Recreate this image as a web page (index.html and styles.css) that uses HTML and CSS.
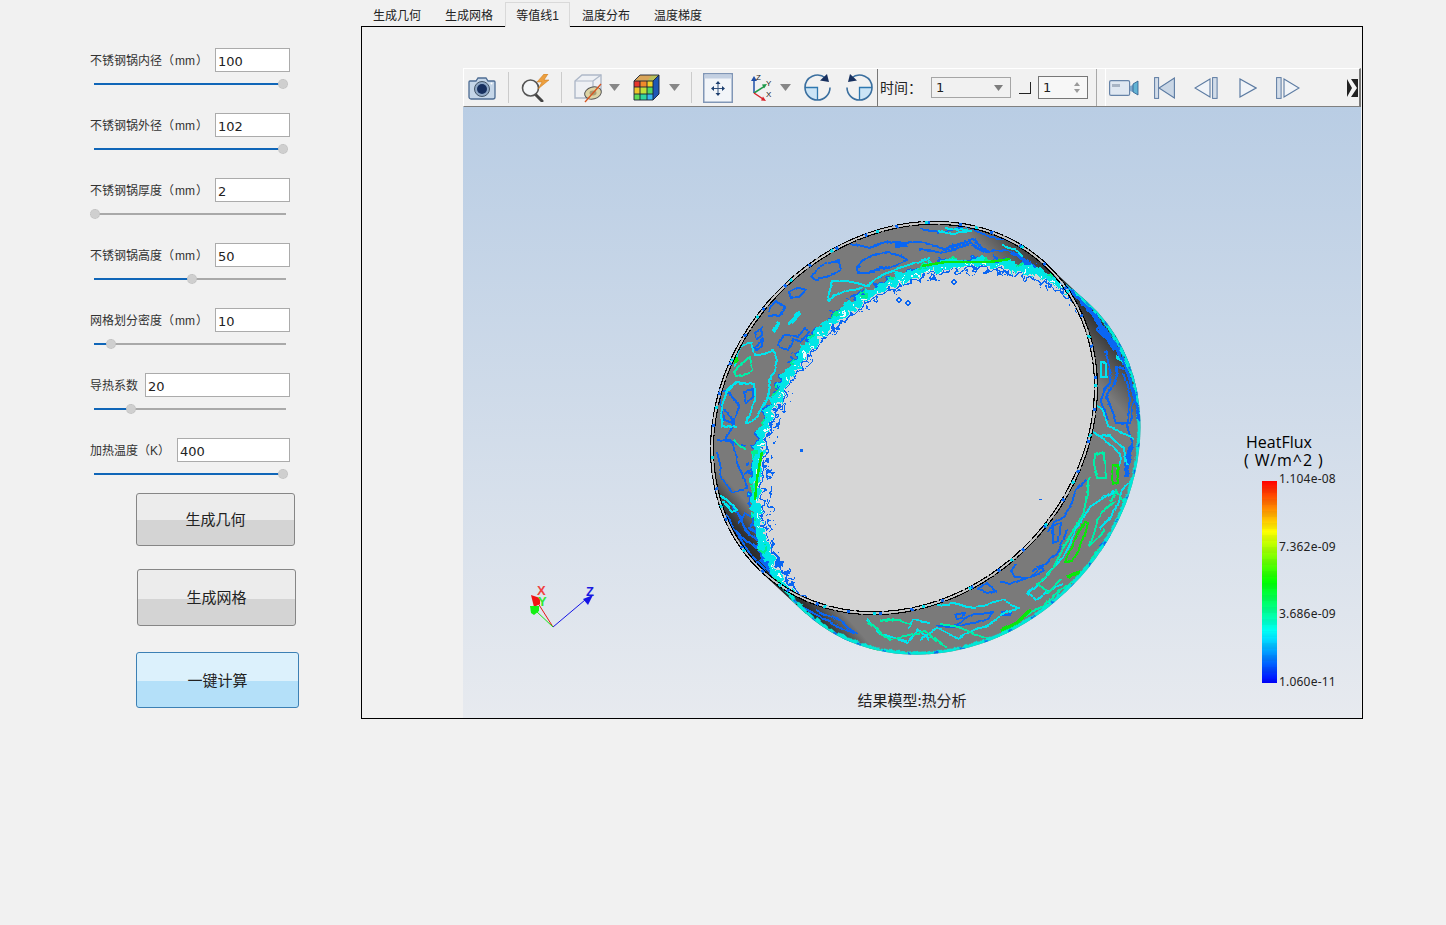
FILE: index.html
```html
<!DOCTYPE html>
<html lang="zh">
<head>
<meta charset="utf-8">
<title>热分析</title>
<link rel="stylesheet" href="styles.css">
</head>
<body>
<div class="app">
  <aside class="side">
    <div class="fields">
      <div class="field"><div class="row"><label>不锈钢锅内径（<span class="u">mm</span>）</label><input class="in" value="100"></div><div class="track"><div class="fill" style="width:189px"><i class="knob"></i></div></div></div>
      <div class="field"><div class="row"><label>不锈钢锅外径（<span class="u">mm</span>）</label><input class="in" value="102"></div><div class="track"><div class="fill" style="width:189px"><i class="knob"></i></div></div></div>
      <div class="field"><div class="row"><label>不锈钢锅厚度（<span class="u">mm</span>）</label><input class="in" value="2"></div><div class="track"><div class="fill" style="width:1px"><i class="knob"></i></div></div></div>
      <div class="field"><div class="row"><label>不锈钢锅高度（<span class="u">mm</span>）</label><input class="in" value="50"></div><div class="track"><div class="fill" style="width:98px"><i class="knob"></i></div></div></div>
      <div class="field"><div class="row"><label>网格划分密度（<span class="u">mm</span>）</label><input class="in" value="10"></div><div class="track"><div class="fill" style="width:17px"><i class="knob"></i></div></div></div>
      <div class="field"><div class="row"><label>导热系数</label><input class="in in-l" value="20"></div><div class="track"><div class="fill" style="width:37px"><i class="knob"></i></div></div></div>
      <div class="field"><div class="row"><label>加热温度（K）</label><input class="in in-m" value="400"></div><div class="track"><div class="fill" style="width:189px"><i class="knob"></i></div></div></div>
    </div>
    <button class="btn btn-geo">生成几何</button>
    <button class="btn btn-mesh">生成网格</button>
    <button class="btn btn-run">一键计算</button>
  </aside>

  <main class="main">
    <nav class="tabs">
      <span class="tab">生成几何</span>
      <span class="tab">生成网格</span>
      <span class="tab active">等值线1</span>
      <span class="tab">温度分布</span>
      <span class="tab">温度梯度</span>
    </nav>
    <section class="pane">
      <div class="toolbar">
        <svg class="m4" width="28" height="24" viewBox="0 0 28 24"><path d="M2 5h6l2-3h8l2 3h6a1 1 0 0 1 1 1v15a2 2 0 0 1-2 2H3a2 2 0 0 1-2-2V6a1 1 0 0 1 1-1z" fill="#c5d6e8" stroke="#4d6c93" stroke-width="1.3"/><circle cx="14" cy="13" r="7.5" fill="#8fa8c6" stroke="#456"/><circle cx="14" cy="13" r="5" fill="#17305f"/><circle cx="23.5" cy="7.5" r="1" fill="#fff"/></svg>
        <span class="sep m12"></span>
        <svg class="m12" width="29" height="28" viewBox="0 0 29 28"><path d="M14 20l7 7" stroke="#444" stroke-width="3" stroke-linecap="round"/><circle cx="9.500" cy="14" r="8" fill="#f4f6f8" stroke="#555" stroke-width="1.600"/><path d="M23 0l-7 8h5l-4 7 11-9h-5l4-6z" fill="#ec9f3e" stroke="#c9761a" stroke-width=".5"/></svg>
        <span class="sep m11"></span>
        <svg class="m12" width="30" height="30" viewBox="0 0 30 30"><path d="M1 8l7-6h19v16l-8 7H1z" fill="#eef0f4" stroke="#aeb8c8" stroke-width="1.4"/><path d="M1 8h18v17M19 8l8-6" fill="none" stroke="#aeb8c8" stroke-width="1.2"/><ellipse cx="19" cy="20" rx="8.500" ry="6" transform="rotate(-15 19 20)" fill="#ddd4a6" stroke="#555"/><ellipse cx="19" cy="20" rx="3.500" ry="2.400" fill="#a79d73"/><path d="M11 29L27 11" stroke="#d8541f" stroke-width="1.3"/></svg>
        <svg class="m5" width="11" height="7" viewBox="0 0 11 7"><path d="M0 0h11L5.500 7z" fill="#878787"/></svg>
        <svg class="m13" width="27" height="27" viewBox="0 0 27 27"><path d="M1 7l6-6h19L20 7z" fill="#b9c05b"/><path d="M7 1h6L8 7H1zM13 1h6l-5 6H8z" fill="#d9a55a"/><rect x="1" y="7" width="6" height="6" fill="#e8352b"/><rect x="7" y="7" width="7" height="6" fill="#f08a2b"/><rect x="14" y="7" width="6" height="6" fill="#f2d22b"/><rect x="1" y="13" width="6" height="7" fill="#f0c52b"/><rect x="7" y="13" width="7" height="7" fill="#bfe03b"/><rect x="14" y="13" width="6" height="7" fill="#52d860"/><rect x="1" y="20" width="6" height="6" fill="#5fdc58"/><rect x="7" y="20" width="7" height="6" fill="#2fd6a0"/><rect x="14" y="20" width="6" height="6" fill="#38b6f0"/><path d="M20 7l6-6v19l-6 6z" fill="#1f57b5"/><path d="M1 7h19v19H1zM7 7v19M14 7v19M1 13h19M1 20h19M20 7l6-6H7L1 7M26 1v19l-6 6" fill="none" stroke="#1a2233" stroke-width=".9"/></svg>
        <svg class="m9" width="11" height="7" viewBox="0 0 11 7"><path d="M0 0h11L5.500 7z" fill="#878787"/></svg>
        <span class="sep m11"></span>
        <svg class="m11" width="30" height="30" viewBox="0 0 30 30"><rect x=".75" y=".75" width="28.500" height="28.500" fill="#f2f5f9" stroke="#8096b6" stroke-width="1.500"/><rect x="1.500" y="1.500" width="27" height="4" fill="#c3d0e2"/><path d="M15 10v11M10 15.500h10" stroke="#33527f"/><path d="M15 8l-2.500 3h5zM15 23l-2.500-3h5zM8 15.500l3-2.500v5zM22 15.500l-3-2.500v5z" fill="#1d3f70"/></svg>
        <svg class="m16" width="24" height="30" viewBox="0 0 24 30"><path d="M5 20V7" stroke="#1f4fa8" stroke-width="1.500"/><path d="M5 3l-3 5h6z" fill="#1f4fa8"/><path d="M5 20l11-7" stroke="#1f9a4a" stroke-width="1.500"/><path d="M18 11l-5 .5 2 4z" fill="#1f9a4a"/><path d="M5 20l9 6" stroke="#d8252b" stroke-width="1.500"/><path d="M17 28l-5-.5 2-4z" fill="#d8252b"/><text class="ax" x="7" y="7">Z</text><text class="ax" x="17" y="13">Y</text><text class="ax" x="17" y="24">X</text></svg>
        <svg class="m7" width="11" height="7" viewBox="0 0 11 7"><path d="M0 0h11L5.500 7z" fill="#878787"/></svg>
        <svg class="m13" width="27" height="27" viewBox="0 0 27 27"><path d="M13.500 13.500H1A12.500 12.500 0 0 0 13.500 26z" fill="#cbe4f6"/><path d="M1 13.500H13.500V26" fill="none" stroke="#2f78b0" stroke-width="1.300"/><path d="M1 13.500A12.500 12.500 0 0 1 21.500 4M26 13.500A12.500 12.500 0 1 1 1 13.500" fill="none" stroke="#3a6f9f" stroke-width="1.600"/><path d="M25 8L16 6.500 23 0z" fill="#17305f"/></svg>
        <svg class="m15" width="27" height="27" viewBox="0 0 27 27"><g transform="matrix(-1 0 0 1 27 0)"><path d="M13.500 13.500H1A12.500 12.500 0 0 0 13.500 26z" fill="#cbe4f6"/><path d="M1 13.500H13.500V26" fill="none" stroke="#2f78b0" stroke-width="1.300"/><path d="M1 13.500A12.500 12.500 0 0 1 21.500 4M26 13.500A12.500 12.500 0 1 1 1 13.500" fill="none" stroke="#3a6f9f" stroke-width="1.600"/><path d="M25 8L16 6.500 23 0z" fill="#17305f"/></g></svg>
        <span class="divider m4"></span>
        <span class="time m2">时间：</span>
        <div class="combo m9"><span>1</span><svg width="9" height="6" viewBox="0 0 9 6"><path d="M0 0h9L4.500 6z" fill="#7d7d7d"/></svg></div>
        <span class="check m8"></span>
        <div class="spin m7"><span>1</span><svg width="6" height="11" viewBox="0 0 6 11"><path d="M3 0l3 4H0zM3 11L0 7h6z" fill="#9a9a9a"/></svg></div>
        <span class="divider-l m8"></span>
        <span class="tb2-edge m8"></span>
        <svg class="m3" width="30" height="16" viewBox="0 0 30 16"><rect x=".6" y=".6" width="20" height="14.800" rx="1.500" fill="#dfe7f1" stroke="#6683a8" stroke-width="1.200"/><rect x="3" y="4" width="8" height="3" fill="#a8b4c4"/><path d="M21 6l3-1v7l-3-1z" fill="#7fa8cc"/><path d="M24 4l5-3v14l-5-3z" fill="#63b3d4" stroke="#2d5c8a" stroke-width=".8"/></svg>
        <svg class="m15" width="21" height="22" viewBox="0 0 21 22"><rect x=".6" y=".6" width="4" height="20.800" fill="#d3dde9" stroke="#5c7ba2"/><path d="M20.400 1v20L5 11z" fill="#c9d6e5" stroke="#5c7ba2" stroke-width="1.100"/></svg>
        <svg class="m19" width="24" height="22" viewBox="0 0 24 22"><path d="M16 2v18L1 11z" fill="#f1f4f8" stroke="#5c7ba2" stroke-width="1.100"/><rect x="18.600" y=".6" width="4.500" height="20.800" fill="#d3dde9" stroke="#5c7ba2"/></svg>
        <svg class="m21" width="18" height="20" viewBox="0 0 18 20"><path d="M1 1v18l16-9z" fill="#f1f4f8" stroke="#5c7ba2" stroke-width="1.200"/></svg>
        <svg class="m19" width="24" height="22" viewBox="0 0 24 22"><rect x=".6" y=".6" width="4.500" height="20.800" fill="#d3dde9" stroke="#5c7ba2"/><path d="M8 2v18l15-9z" fill="#f1f4f8" stroke="#5c7ba2" stroke-width="1.100"/></svg>
        <svg class="m47 chev" width="11" height="18" viewBox="0 0 11 18"><rect width="11" height="18" fill="#222"/><path d="M0 0l4 0 6 9-6 9H0l5-9z" fill="#f4f4f4"/></svg>
      </div>

      <div class="view">
        <svg class="scene" viewBox="463 107 898 611" width="898" height="611">
          <defs>
            <linearGradient id="shade" gradientUnits="userSpaceOnUse" x1="765" y1="592" x2="1105" y2="295">
              <stop offset="0" stop-color="#1d1d1d"/><stop offset=".05" stop-color="#333"/><stop offset=".1" stop-color="#7a7a7a"/><stop offset=".86" stop-color="#7a7a7a"/><stop offset=".91" stop-color="#555"/><stop offset=".96" stop-color="#2a2a2a"/><stop offset="1" stop-color="#1d1d1d"/>
            </linearGradient>
            <clipPath id="hull">
              <ellipse cx="904" cy="418" rx="210" ry="179" transform="rotate(-48 904 418)"/>
              <ellipse cx="947" cy="458" rx="210" ry="179" transform="rotate(-48 947 458)"/>
              <polygon points="1044,262 1087,302 806,614 763,574"/>
            </clipPath>
            <clipPath id="front"><ellipse cx="904" cy="418" rx="207" ry="176" transform="rotate(-48 904 418)"/></clipPath>
            <filter id="jag" x="-5%" y="-5%" width="110%" height="110%" color-interpolation-filters="sRGB">
              <feTurbulence type="fractalNoise" baseFrequency="0.14" numOctaves="2" seed="4"/>
              <feDisplacementMap in="SourceGraphic" scale="15" xChannelSelector="R" yChannelSelector="G"/>
            </filter>
            <filter id="jag2" x="-5%" y="-5%" width="110%" height="110%" color-interpolation-filters="sRGB">
              <feTurbulence type="fractalNoise" baseFrequency="0.2" numOctaves="1" seed="9"/>
              <feDisplacementMap in="SourceGraphic" scale="4" xChannelSelector="R" yChannelSelector="G"/>
            </filter>
            <filter id="wob" x="-5%" y="-5%" width="110%" height="110%" color-interpolation-filters="sRGB">
              <feTurbulence type="fractalNoise" baseFrequency="0.045" numOctaves="2" seed="2"/>
              <feDisplacementMap in="SourceGraphic" scale="7" xChannelSelector="R" yChannelSelector="G"/>
            </filter>
          </defs>

          <g clip-path="url(#hull)">
            <rect x="700" y="210" width="450" height="450" fill="url(#shade)"/>
            <g class="lines blue" filter="url(#wob)">
              <polygon points="812,275 818,267 838,260 840,270 832,275 817,278"/>
              <polygon points="857,267 863,260 887,252 900,255 907,260 887,268 867,272 858,272"/>
              <polygon points="790,293 797,288 807,288 800,298 792,299"/>
              <polygon points="778,345 785,334 798,338 805,327 808,332 800,343 793,340 788,350"/>
              <polygon points="755,333 762,328 763,335 757,338"/>
              <polygon points="755,349 763,338 762,346 757,350"/>
              <polygon points="720,390 730,392 738,407 733,423 723,420"/>
              <polygon points="742,390 752,388 752,397 745,403"/>
              <polyline points="770,312 776,302 784,308 778,315 768,316"/>
              <polyline points="850,243 870,248 893,241 920,243 945,248 972,240 990,252 1008,250 1026,262"/>
              <polyline points="920,250 940,252 970,243 987,252 1007,250"/>
              <polyline points="920,228 945,232 965,228 990,238 1012,240"/>
              <polyline points="1077,290 1093,317 1117,343 1133,367 1137,397 1140,423"/>
              <polyline points="1097,330 1110,343 1123,353 1127,370 1117,367 1117,373 1107,397 1117,423 1130,423 1133,403"/>
              <polyline points="1105,350 1112,372 1102,400 1108,420"/>
              <polyline points="1122,372 1130,400 1126,425 1134,450 1126,472"/>
              <polyline points="717,440 733,443 737,463 743,477 745,490 732,493 723,477 717,453"/>
              <polyline points="725,410 735,425 725,440 745,445"/>
              <polyline points="738,523 743,512 753,517 750,527 763,540 756,548 738,532"/>
              <polyline points="722,510 740,537 753,557 780,587"/>
              <polyline points="730,503 748,530 766,552 782,572"/>
              <polyline points="803,607 833,623 857,633 843,622 817,610"/>
              <polyline points="795,612 820,628 850,642"/>
              <polyline points="1087,480 1077,490 1073,503 1063,517 1053,523 1048,533"/>
              <polygon points="1052,527 1060,523 1058,540 1053,542"/>
              <polyline points="1000,582 1010,585 1027,578 1047,563 1057,553 1063,540 1067,530"/>
              <polyline points="1030,570 1040,567 1043,572 1027,578 1015,577 1010,570 1015,563"/>
              <polygon points="937,627 953,627 963,622 973,613 993,612 987,618 970,625 953,628"/>
              <polygon points="955,613 965,613 963,618 957,618"/>
              <polygon points="978,590 987,583 995,590 988,593"/>
              <polygon points="1003,613 1010,612 1009,616 1004,616"/>
              <polyline points="1100,545 1110,535 1103,550"/>
              <polyline points="893,244 907,244" class="thick"/>
              <polyline points="1010,252 1040,272" class="thick"/>
              <polyline points="1095,320 1115,350" class="thick"/>
              <polyline points="760,560 790,590" class="thick"/>
              <polyline points="1125,475 1132,445" class="thick"/>
            </g>
            <g class="lines cyan" filter="url(#wob)">
              <polyline points="827,302 833,282 850,281 867,285 885,273 903,267 930,257"/>
              <polyline points="827,302 847,290 870,285"/>
              <polyline points="733,367 742,347 752,343 755,355 772,350 778,360 772,377 768,397 763,410 757,418 747,423 755,400 753,383 738,380 728,390 720,417 723,425 738,428"/>
              <polyline points="937,230 953,235 970,233 945,228"/>
              <polyline points="1002,245 1013,248 1022,258"/>
              <polygon points="1102,360 1107,363 1107,377 1102,377"/>
              <polyline points="1117,357 1128,367 1120,357"/>
              <polyline points="1095,403 1103,410 1107,427 1117,430 1133,437"/>
              <polyline points="1093,432 1113,447 1123,460 1118,468"/>
              <polyline points="1115,490 1090,507 1077,530 1063,557 1037,587 1028,595 1035,600 1053,590 1063,585"/>
              <polyline points="920,607 953,603 973,607 1003,600 1017,607 1000,617 983,627 960,640 937,630 920,640"/>
              <polyline points="720,493 737,510 732,512 722,500"/>
              <polyline points="867,620 880,633 907,643 917,630 930,640"/>
              <polyline points="907,630 913,620 930,623"/>
              <polyline points="1133,475 1120,492 1110,520 1100,530"/>
              <polyline points="1100,437 1110,435 1125,450 1128,465"/>
              <polyline points="1120,505 1132,500 1134,480"/>
              <polyline points="788,323 800,312" class="thick"/>
              <polyline points="772,333 778,322" class="thick"/>
            </g>
            <g class="lines teal" filter="url(#wob)">
              <polygon points="733,373 737,367 750,358 753,370 747,373 735,375"/>
              <polygon points="1093,453 1103,455 1105,478 1097,478 1093,463"/>
              <polyline points="1090,477 1083,517 1063,547 1053,570"/>
              <polyline points="1053,570 1037,585 1050,593 1062,580"/>
              <polyline points="1113,500 1098,520 1090,545 1105,530"/>
              <polyline points="1110,500 1115,490 1125,505 1118,520"/>
              <polyline points="940,625 960,628 990,640 1010,630"/>
              <polyline points="868,622 890,640 925,632 945,648"/>
              <polyline points="880,622 900,618 910,625"/>
              <polyline points="735,440 745,450"/>
              <polyline points="1020,620 1050,600 1075,580 1100,548"/>
            </g>
            <g class="lines green" filter="url(#wob)">
              <polygon points="1113,465 1119,465 1117,483 1112,485"/>
              <polygon points="1085,523 1088,523 1083,543 1073,562 1065,562 1070,550"/>
              <polyline points="1000,630 1017,622 1030,610" class="thick"/>
              <polyline points="1067,577 1080,572" class="thick"/>
              <polyline points="733,361 738,360" class="thick"/>
              <polyline points="870,648 880,650" class="thick"/>
            </g>
            <ellipse class="edge" cx="947" cy="458" rx="209" ry="178" transform="rotate(-48 947 458)" filter="url(#jag2)"/>
            <ellipse class="edge-d" cx="947" cy="458" rx="209" ry="178" transform="rotate(-48 947 458)" filter="url(#jag2)"/>
            <path class="edge-b" d="M1060 282 L1090 310 Q1130 355 1139 420" filter="url(#jag2)"/>
          </g>

          <g clip-path="url(#front)">
            <ellipse cx="947" cy="458" rx="210" ry="179" transform="rotate(-48 947 458)" fill="#d6d6d6"/>
          </g>

          <g clip-path="url(#front)">
            <g filter="url(#jag)">
              <ellipse class="rim r1" cx="947" cy="458" rx="209" ry="178" transform="rotate(-48 947 458)"/>
              <ellipse class="rim r2" cx="947" cy="458" rx="214" ry="183" transform="rotate(-48 947 458)"/>
              <ellipse class="rim r3" cx="947" cy="458" rx="207" ry="176" transform="rotate(-48 947 458)"/>
              <ellipse class="rim r4" cx="947" cy="458" rx="202" ry="171" transform="rotate(-48 947 458)"/>
              <ellipse class="rim r5" cx="947" cy="458" rx="212" ry="181" transform="rotate(-48 947 458)"/>
              <ellipse class="rim r6" cx="947" cy="458" rx="198" ry="167" transform="rotate(-48 947 458)"/>
              <path class="rim r7" d="M797 592Q766 550 770 500Q768 450 786 400"/>
            </g>
            <polyline class="band" points="922,266 945,262 965,262 990,262 1010,259"/>
            <polyline class="band" points="755,500 757,478 762,452"/>
          </g>
          <g class="spots">
            <rect x="800" y="449" width="3" height="3"/>
            <rect x="1039" y="499" width="3" height="1"/>
            <circle cx="899" cy="300" r="2" class="ring"/>
            <circle cx="908" cy="303" r="2" class="ring"/>
            <circle cx="954" cy="282" r="2" class="ring"/>
          </g>

          <ellipse class="gap" cx="904" cy="418" rx="208.500" ry="177.500" transform="rotate(-48 904 418)"/>
          <ellipse class="outline" cx="904" cy="418" rx="210" ry="179" transform="rotate(-48 904 418)"/>
          <ellipse class="outline" cx="904" cy="418" rx="207" ry="176" transform="rotate(-48 904 418)"/>
          <ellipse class="dash" cx="904" cy="418" rx="208.500" ry="177.500" transform="rotate(-48 904 418)"/>
          <ellipse class="dash dash2" cx="904" cy="418" rx="208.500" ry="177.500" transform="rotate(-48 904 418)"/>

          <g class="triad">
            <path d="M553 627L585 600" stroke="#1414e6"/>
            <path d="M553 627L536 600" stroke="#e61414"/>
            <path d="M553 627L536 611" stroke="#14e614"/>
            <path d="M593 595l-10 4 5 6z" fill="#1414e6"/>
            <path d="M531 595l3 12 6-3 0-6z" fill="#f01414"/>
            <path d="M530 606l9 0 0 5-5 4-3-2z" fill="#14f014"/>
            <text x="537" y="595" fill="#f04040">X</text>
            <text x="538" y="606" fill="#30e830">Y</text>
            <text x="586" y="596" fill="#1a1ae0">Z</text>
          </g>
        </svg>

        <div class="legend">
          <div class="l-title">HeatFlux</div>
          <div class="l-unit">( W/m^2 )</div>
          <div class="l-body">
            <div class="l-bar"></div>
            <div class="l-vals"><span>1.104e-08</span><span>7.362e-09</span><span>3.686e-09</span><span>1.060e-11</span></div>
          </div>
        </div>
        <div class="caption">结果模型:热分析</div>
      </div>
    </section>
  </main>
</div>
</body>
</html>
```

FILE: styles.css
```css
* { box-sizing: border-box; }
html, body { margin: 0; height: 100%; }
body {
  background: #f1f1f1;
  color: #222;
  font-family: "Liberation Sans", "Noto Sans CJK SC", sans-serif;
  overflow: hidden;
}
.app { display: flex; align-items: flex-start; width: 1446px; height: 925px; }

/* left panel */
.side { width: 361px; flex: none; padding: 48px 0 0 90px; display: flex; flex-direction: column; align-items: flex-start; }
.fields { display: flex; flex-direction: column; gap: 24px; width: 200px; }
.field { height: 41px; }
.row { display: flex; justify-content: space-between; align-items: center; height: 24px; }
.row label { font-size: 12px; color: #333; white-space: nowrap; padding-bottom: 2px; }
.u { margin: 0 1px; }
.in {
  width: 75px; height: 24px; padding: 2px 2px 0;
  border: 1px solid #ababab; background: #fff; color: #222;
  font: 13px "DejaVu Sans", sans-serif; outline: none;
}
.in-l { width: 145px; }
.in-m { width: 113px; }
.track { margin: 11px 0 0 4px; width: 192px; height: 2px; background: #a9a9a9; }
.fill { position: relative; height: 2px; background: #1066b8; }
.knob { position: absolute; right: -5px; top: -4px; width: 10px; height: 10px; border-radius: 50%; background: #cfcfcf; border: 1px dotted #bdbdbd; }

.btn {
  display: block; padding: 0 0 2px; border: 1px solid #868686; border-radius: 3px;
  font: 15px "Noto Sans CJK SC", sans-serif; color: #222;
  background: linear-gradient(#ececec 51%, #d4d4d4 51%);
}
.btn-geo { width: 159px; height: 53px; margin: 14px 0 0 46px; }
.btn-mesh { width: 159px; height: 57px; margin: 23px 0 0 47px; background: linear-gradient(#ececec 53%, #d4d4d4 53%); }
.btn-run { width: 163px; height: 56px; margin: 26px 0 0 46px; border-color: #3c80b4; background: linear-gradient(#dcf1fc 51%, #b4e0f9 51%); }

/* tabs */
.main { width: 1002px; flex: none; }
.tabs { display: flex; height: 26px; padding-top: 2px; align-items: stretch; }
.tab { width: 72px; padding-top: 7px; text-align: center; font-size: 12px; line-height: 15px; color: #222; white-space: nowrap; }
.tab.active { position: relative; z-index: 1; width: 65px; height: 25px; background: #f1f1f1; border: 1px solid #d9d9d9; border-bottom: 0; padding-top: 6px; }
.pane { height: 693px; border: 1px solid #000; padding: 41px 1px 0 101px; }

/* toolbar */
.toolbar {
  display: flex; align-items: center; height: 39px;
  background: #f1f1f1;
  border-top: 1px solid #fff; border-bottom: 1px solid #808080; border-left: 1px solid #fff; border-right: 2px solid #7a7a7a;
}
.toolbar > * { flex: none; }
.m2 { margin-left: 2px; } .m3 { margin-left: 3px; } .m4 { margin-left: 4px; } .m5 { margin-left: 5px; }
.m7 { margin-left: 7px; } .m8 { margin-left: 8px; } .m9 { margin-left: 9px; } .m11 { margin-left: 11px; }
.m12 { margin-left: 12px; } .m13 { margin-left: 13px; } .m15 { margin-left: 15px; } .m16 { margin-left: 16px; }
.m19 { margin-left: 19px; } .m21 { margin-left: 21px; } .m47 { margin-left: 47px; }
.chev { filter: blur(.5px); }
.sep { width: 1px; height: 31px; background: #cbcbcb; }
.divider { width: 1px; align-self: stretch; background: #777; }
.divider-l { width: 1px; align-self: stretch; background: #a8a8a8; }
.tb2-edge { width: 1px; align-self: stretch; background: #fff; }
.time { width: 42px; padding-bottom: 2px; font: 14px "Noto Sans CJK SC", sans-serif; color: #222; }
.combo, .spin { display: flex; justify-content: space-between; align-items: center; font: 13px "DejaVu Sans", sans-serif; color: #222; }
.combo { width: 80px; height: 21px; border: 1px solid #a5a5a5; padding: 0 7px 0 4px; background: #f1f1f1; }
.check { width: 12px; height: 12px; border-right: 1px solid #222; border-bottom: 1px solid #222; }
.spin { width: 50px; height: 23px; border: 1px solid #777; padding: 0 7px 0 4px; background: #f7f7f7; }
.ax { font: 8px "Liberation Sans", sans-serif; fill: #222; }

/* 3D view */
.view { position: relative; height: 611px; background: linear-gradient(#b9cde4, #e7eaef); overflow: hidden; }
.scene { display: block; }
.lines polygon, .lines polyline { fill: none; stroke-width: 2; stroke-linejoin: round; shape-rendering: crispEdges; }
.lines .thick { stroke-width: 4; }
.blue polygon, .blue polyline { stroke: #0a66f2; }
.cyan polygon, .cyan polyline { stroke: #00e4ee; }
.teal polygon, .teal polyline { stroke: #00eea8; }
.green polygon, .green polyline { stroke: #0ae60a; }
.edge { fill: none; stroke: #00e8d8; stroke-width: 4; shape-rendering: crispEdges; }
.edge-d { fill: none; stroke: #0a66f2; stroke-width: 2; stroke-dasharray: 4 22; shape-rendering: crispEdges; }
.edge-b { fill: none; stroke: #0a66f2; stroke-width: 3; shape-rendering: crispEdges; }
.rim { fill: none; shape-rendering: crispEdges; }
.r1 { stroke: #00e6e6; stroke-width: 9; }
.r2 { stroke: #0a66f2; stroke-width: 2; stroke-dasharray: 16 14; }
.r3 { stroke: #f0fbfb; stroke-width: 2; stroke-dasharray: 3 11; }
.r4 { stroke: #0a66f2; stroke-width: 2; }
.r5 { stroke: #00ee90; stroke-width: 3; stroke-dasharray: 7 26; }
.r6 { stroke: #0a66f2; stroke-width: 1.5; stroke-dasharray: 8 30; }
.r7 { stroke: #0a66f2; stroke-width: 2; stroke-dasharray: 10 7; }
.band { fill: none; stroke: #0ae60a; stroke-width: 2.5; shape-rendering: crispEdges; }
.spots rect { fill: #0a66f2; }
.spots .ring { fill: none; stroke: #0a66f2; stroke-width: 1.3; shape-rendering: crispEdges; }
.outline { fill: none; stroke: #000; stroke-width: 1.1; shape-rendering: crispEdges; stroke-dasharray: 26 2; }
.gap { fill: none; stroke: #c8c8c8; stroke-width: 2; }
.dash { fill: none; stroke: #0a66f2; stroke-width: 3; stroke-dasharray: 3 29; shape-rendering: crispEdges; }
.dash2 { stroke: #00dcea; stroke-dasharray: 3 47; stroke-dashoffset: 14; }
.triad path[stroke] { fill: none; stroke-width: 1; }
.triad text { font: bold 13px "Liberation Sans", sans-serif; }

.legend { position: absolute; left: 781px; top: 326px; width: 82px; }
.l-title { font: 16px/18px "Open Sans", sans-serif; color: #000; padding-left: 2px; }
.l-unit { font: 16px/18px "Open Sans", sans-serif; color: #000; white-space: nowrap; letter-spacing: .9px; }
.l-body { display: flex; margin: 12px 0 0 18px; }
.l-bar {
  width: 15px; height: 202px; flex: none;
  background:
    repeating-linear-gradient(rgba(255,255,255,0) 0 6px, rgba(0,0,0,.03) 6px 12px),
    linear-gradient(#f00, #ff0 25%, #0f0 50%, #0ff 75%, #00f);
}
.l-vals { display: flex; flex-direction: column; justify-content: space-between; height: 218px; margin: -10px 0 0 2px; font: 12px/15px "Noto Sans", sans-serif; letter-spacing: .2px; color: #222; white-space: nowrap; }
.caption { position: absolute; left: 0; right: 0; bottom: 8px; text-align: center; font: 15px/20px "Noto Sans CJK SC", sans-serif; color: #222; }
```
